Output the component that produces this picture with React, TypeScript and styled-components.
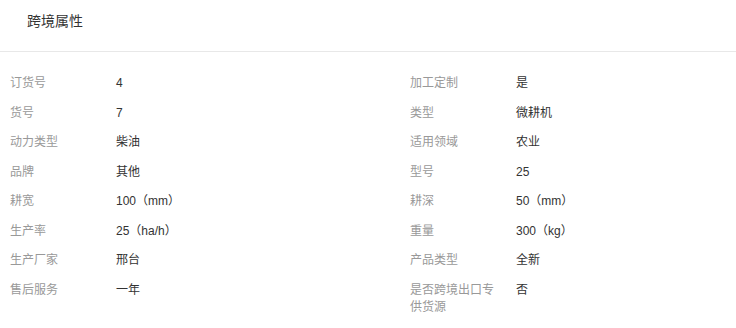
import styled, { createGlobalStyle } from "styled-components";

const GlobalStyle = createGlobalStyle`
  body {
    margin: 0;
    background: #fff;
    font-family: "Liberation Sans", "Noto Sans CJK SC", sans-serif;
  }
`;

const Panel = styled.div`
  width: 736px;
  background: #fff;
`;

const Header = styled.div`
  padding: 12px 27px 21px;
  border-bottom: 1px solid #e8e8e8;
`;

const Title = styled.h3`
  margin: 0;
  font-size: 14px;
  font-weight: 400;
  line-height: 18px;
  color: #333;
`;

const Grid = styled.div`
  display: grid;
  grid-template-columns: 400px 1fr;
  padding: 17px 0 0 10px;
`;

const Item = styled.div`
  display: flex;
  padding: 6px 0;
  font-size: 12px;
  line-height: 17.5px;
`;

const Label = styled.span`
  width: 90px;
  margin-right: 16px;
  flex-shrink: 0;
  color: #999;
`;

const Value = styled.span`
  color: #333;
`;

const attrs: [string, string][] = [
  ["订货号", "4"],
  ["加工定制", "是"],
  ["货号", "7"],
  ["类型", "微耕机"],
  ["动力类型", "柴油"],
  ["适用领域", "农业"],
  ["品牌", "其他"],
  ["型号", "25"],
  ["耕宽", "100（mm）"],
  ["耕深", "50（mm）"],
  ["生产率", "25（ha/h）"],
  ["重量", "300（kg）"],
  ["生产厂家", "邢台"],
  ["产品类型", "全新"],
  ["售后服务", "一年"],
  ["是否跨境出口专供货源", "否"],
];

const App = () => (
  <>
    <GlobalStyle />
    <Panel>
      <Header>
        <Title>跨境属性</Title>
      </Header>
      <Grid>
        {attrs.map(([label, value]) => (
          <Item key={label}>
            <Label>{label}</Label>
            <Value>{value}</Value>
          </Item>
        ))}
      </Grid>
    </Panel>
  </>
);

export default App;
